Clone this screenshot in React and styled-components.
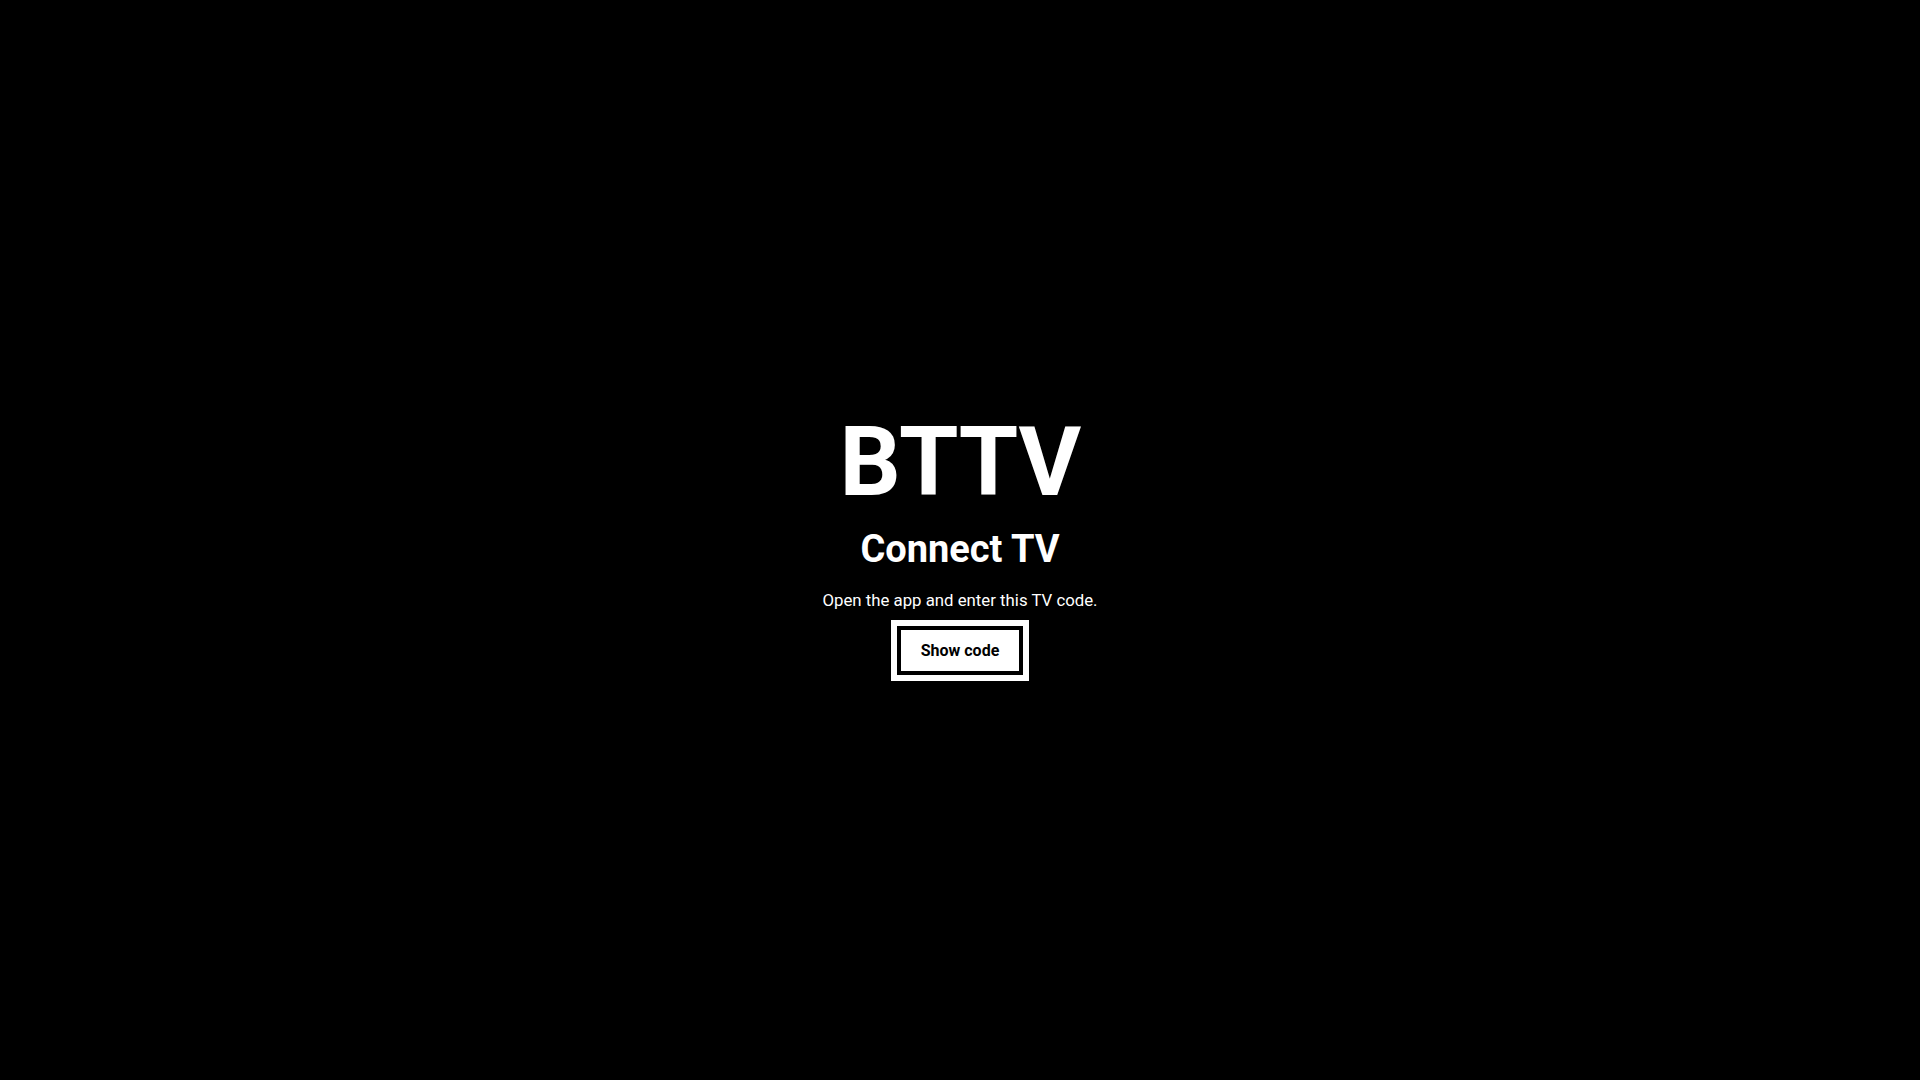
import React from "react";
import styled, { createGlobalStyle } from "styled-components";

const GlobalStyle = createGlobalStyle`
  html, body {
    margin: 0;
    padding: 0;
    background: #000;
  }
  body {
    font-family: Roboto, "Liberation Sans", Arial, sans-serif;
    color: #fff;
  }
`;

const Screen = styled.main`
  min-height: 100vh;
  display: flex;
  flex-direction: column;
  align-items: center;
  justify-content: center;
  background: #000;
`;

const Logo = styled.h1`
  margin: 0;
  font-size: 96px;
  font-weight: 700;
  line-height: normal;
  letter-spacing: -0.5px;
`;

const Title = styled.h2`
  margin: 9px 0 0;
  font-size: 38px;
  font-weight: 700;
  line-height: normal;
`;

const Hint = styled.p`
  margin: 19px 0 0;
  font-size: 16.8px;
  font-weight: 400;
  line-height: normal;
`;

const CodeButton = styled.button`
  margin-top: 16px;
  padding: 12px 20px;
  background: #fff;
  color: #000;
  border: 4px solid #000;
  outline: 6px solid #fff;
  font-family: Roboto, "Liberation Sans", Arial, sans-serif;
  font-size: 16px;
  font-weight: 700;
  line-height: 17px;
  cursor: pointer;
`;

const App = () => {
  return (
    <>
      <GlobalStyle />
      <Screen>
        <Logo>BTTV</Logo>
        <Title>Connect TV</Title>
        <Hint>Open the app and enter this TV code.</Hint>
        <CodeButton type="button">Show code</CodeButton>
      </Screen>
    </>
  );
};

export default App;
